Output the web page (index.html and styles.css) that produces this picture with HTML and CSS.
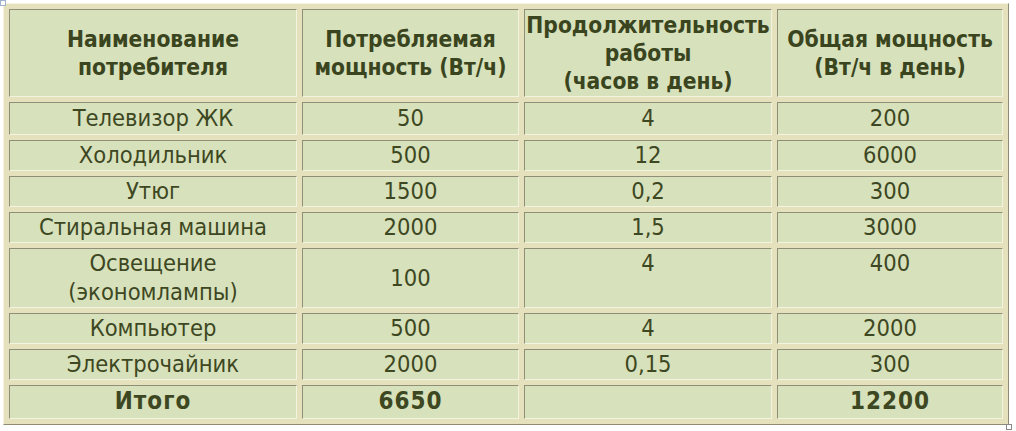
FILE: index.html
```html
<!DOCTYPE html>
<html lang="ru">
<head>
<meta charset="utf-8">
<link rel="stylesheet" href="styles.css">
</head>
<body>
<span class="handle handle-tl"></span>
<table class="power">
  <colgroup>
    <col class="c1"><col class="c2"><col class="c3"><col class="c4">
  </colgroup>
  <tr class="head">
    <th>Наименование<br>потребителя</th>
    <th>Потребляемая<br>мощность (Вт/ч)</th>
    <th>Продолжительность<br>работы<br>(часов в день)</th>
    <th>Общая мощность<br>(Вт/ч в день)</th>
  </tr>
  <tr class="r1"><td>Телевизор ЖК</td><td>50</td><td>4</td><td>200</td></tr>
  <tr class="r"><td>Холодильник</td><td>500</td><td>12</td><td>6000</td></tr>
  <tr class="r"><td>Утюг</td><td>1500</td><td>0,2</td><td>300</td></tr>
  <tr class="r"><td>Стиральная машина</td><td>2000</td><td>1,5</td><td>3000</td></tr>
  <tr class="r2"><td>Освещение<br>(экономлампы)</td><td>100</td><td class="top">4</td><td class="top">400</td></tr>
  <tr class="r"><td>Компьютер</td><td>500</td><td>4</td><td>2000</td></tr>
  <tr class="r"><td>Электрочайник</td><td>2000</td><td>0,15</td><td>300</td></tr>
  <tr class="total"><td>Итого</td><td>6650</td><td></td><td>12200</td></tr>
</table>
<span class="handle handle-br"></span>
</body>
</html>
```

FILE: styles.css
```css
html, body {
  margin: 0;
  padding: 0;
  background: #ffffff;
}

body {
  position: relative;
  width: 1016px;
  height: 431px;
  overflow: hidden;
  font-family: "DejaVu Sans Condensed", "DejaVu Sans", sans-serif;
  color: #3d4722;
}

.power {
  margin: 3px 0 0 3px;
  width: 1006px;
  table-layout: fixed;
  border-collapse: separate;
  border-spacing: 5px;
  background: #e6e1bd;
  border: 1px solid;
  border-color: #f6f3de #8e8b74 #8e8b74 #f6f3de;
  box-sizing: border-box;
}

.c1 { width: 288px; }
.c2 { width: 217px; }
.c3 { width: 248px; }
.c4 { width: 226px; }

.power th,
.power td {
  background: #d7e1bb;
  border: 1px solid;
  border-color: #8f8f78 #f3f3e2 #f3f3e2 #8f8f78;
  text-align: center;
  vertical-align: middle;
  padding: 0;
  box-sizing: border-box;
  font-size: 23.5px;
  line-height: 29px;
  white-space: nowrap;
}

.power th {
  font-weight: bold;
  font-size: 22.6px;
  line-height: 28px;
  height: 88px;
  color: #3a4520;
}

.r1 td { height: 33px; }
.r td { height: 31px; }
.r2 td { height: 60px; }
.total td {
  height: 34px;
  font-weight: bold;
  font-size: 24px;
  letter-spacing: 1px;
  padding-bottom: 1px;
}

.power td.top {
  vertical-align: top;
  padding-top: 0;
}

.handle {
  position: absolute;
  width: 6px;
  height: 6px;
  box-sizing: border-box;
  background: #ffffff;
}

.handle-tl {
  left: 0;
  top: 0;
  border: 1px solid #9fb4cc;
}

.handle-br {
  left: 1006px;
  top: 424px;
  border: 1px solid #8a8a8a;
}
```
